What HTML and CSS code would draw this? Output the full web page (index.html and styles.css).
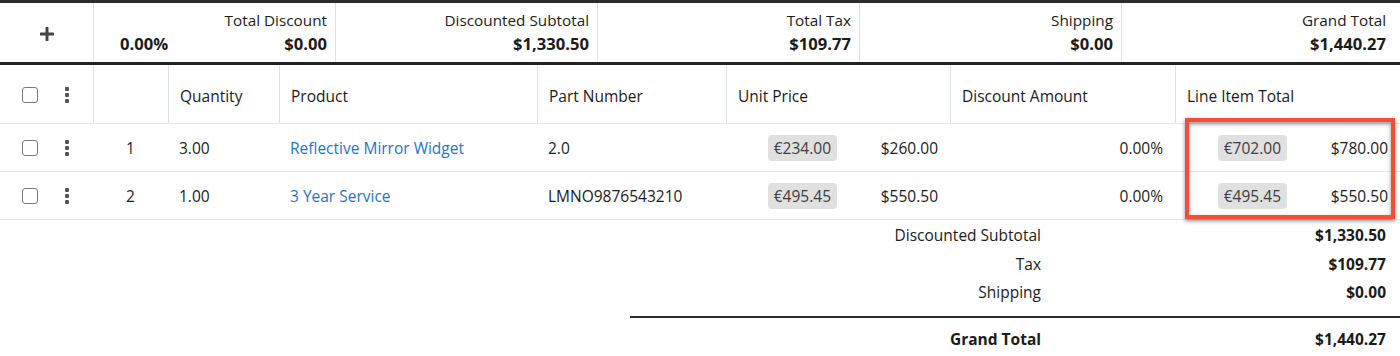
FILE: index.html
```html
<!DOCTYPE html>
<html>
<head>
<meta charset="utf-8">
<link rel="stylesheet" href="styles.css">
</head>
<body>
<div class="worksheet">
  <div class="summary">
    <div class="sum-cell sum-add">
      <svg width="14" height="14" viewBox="0 0 14 14"><path d="M7 1v12M1 7h12" stroke="#444" stroke-width="3" stroke-linecap="round"/></svg>
    </div>
    <div class="sum-cell sum-discount">
      <div class="sum-label">Total Discount</div>
      <div class="sum-values"><span class="sum-value">0.00%</span><span class="sum-value">$0.00</span></div>
    </div>
    <div class="sum-cell">
      <div class="sum-label">Discounted Subtotal</div>
      <div class="sum-value">$1,330.50</div>
    </div>
    <div class="sum-cell">
      <div class="sum-label">Total Tax</div>
      <div class="sum-value">$109.77</div>
    </div>
    <div class="sum-cell">
      <div class="sum-label">Shipping</div>
      <div class="sum-value">$0.00</div>
    </div>
    <div class="sum-cell sum-last">
      <div class="sum-label">Grand Total</div>
      <div class="sum-value">$1,440.27</div>
    </div>
  </div>

  <div class="grid head">
    <div class="cell c-ctl"><span class="checkbox"></span><span class="dots"><i></i><i></i><i></i></span></div>
    <div class="cell"></div>
    <div class="cell">Quantity</div>
    <div class="cell">Product</div>
    <div class="cell">Part Number</div>
    <div class="cell">Unit Price</div>
    <div class="cell">Discount Amount</div>
    <div class="cell">Line Item Total</div>
  </div>

  <div class="rows">
    <div class="grid row">
      <div class="cell c-ctl"><span class="checkbox"></span><span class="dots"><i></i><i></i><i></i></span></div>
      <div class="cell c-num">1</div>
      <div class="cell">3.00</div>
      <div class="cell"><a class="link">Reflective Mirror Widget</a></div>
      <div class="cell">2.0</div>
      <div class="cell c-money"><span class="badge">€234.00</span><span class="amt">$260.00</span></div>
      <div class="cell c-right">0.00%</div>
      <div class="cell c-money"><span class="badge">€702.00</span><span class="amt">$780.00</span></div>
    </div>
    <div class="grid row">
      <div class="cell c-ctl"><span class="checkbox"></span><span class="dots"><i></i><i></i><i></i></span></div>
      <div class="cell c-num">2</div>
      <div class="cell">1.00</div>
      <div class="cell"><a class="link">3 Year Service</a></div>
      <div class="cell">LMNO9876543210</div>
      <div class="cell c-money"><span class="badge">€495.45</span><span class="amt">$550.50</span></div>
      <div class="cell c-right">0.00%</div>
      <div class="cell c-money"><span class="badge">€495.45</span><span class="amt">$550.50</span></div>
    </div>
    <div class="highlight"></div>
  </div>

  <div class="totals">
    <div class="t-label">Discounted Subtotal</div><div class="t-value">$1,330.50</div>
    <div class="t-label">Tax</div><div class="t-value">$109.77</div>
    <div class="t-label">Shipping</div><div class="t-value">$0.00</div>
    <div class="t-rule"></div>
    <div class="t-label t-grand">Grand Total</div><div class="t-value">$1,440.27</div>
  </div>
</div>
</body>
</html>
```

FILE: styles.css
```css
* { box-sizing: border-box; }
html, body { margin: 0; padding: 0; background: #fff; }
body {
  font-family: "Open Sans", "Noto Sans", sans-serif;
  font-size: 15.5px;
  color: #1b1b1b;
  width: 1400px;
  height: 356px;
  overflow: hidden;
}
.worksheet { width: 1400px; }

.summary {
  display: grid;
  grid-template-columns: 93px 242px 262px 262px 262px 279px;
  border-top: 3px solid #2b2b2b;
  border-bottom: 3px solid #222;
  height: 65px;
}
.sum-cell {
  display: flex;
  flex-direction: column;
  align-items: flex-end;
  padding: 7px 8px 0 0;
  border-left: 1px solid #dde3ea;
}
.sum-add {
  border-left: none;
  align-items: center;
  justify-content: center;
  padding: 2px 0 0 0;
}
.sum-discount { padding-left: 26px; }
.sum-discount .sum-values {
  display: flex;
  justify-content: space-between;
  width: 100%;
}
.sum-last { padding-right: 14px; }
.sum-label { font-size: 15.3px; line-height: 21px; }
.sum-value { font-size: 16.6px; font-weight: 700; line-height: 26px; }

.grid {
  display: grid;
  grid-template-columns: 93px 75px 111px 258px 189px 224px 225px 225px;
}
.head { height: 59px; border-bottom: 1px solid #e4e7ee; }
.head .cell { border-left: 1px solid #dde3ea; padding-top: 3px; }
.head .cell:first-child { border-left: none; padding-top: 1px; }
.cell {
  display: flex;
  align-items: center;
  padding: 0 11px;
  white-space: nowrap;
}
.c-ctl { padding: 0 0 0 22px; gap: 27px; }
.c-num { justify-content: center; padding: 0; }
.c-right { justify-content: flex-end; padding-right: 12px; }
.c-money { justify-content: flex-end; padding-right: 12px; }

.rows { position: relative; }
.row { height: 48px; border-bottom: 1px solid #e4e7ee; }

.checkbox {
  width: 16px;
  height: 16px;
  border: 1.5px solid #7a7a7a;
  border-radius: 3px;
  display: inline-block;
  flex: none;
}
.dots {
  display: flex;
  flex-direction: column;
  gap: 2px;
  width: 4px;
}
.dots i {
  display: block;
  width: 4px;
  height: 4px;
  border-radius: 1px;
  background: #555;
}
.link { color: #1b75cf; text-decoration: none; }

.badge {
  background: #e0e0e0;
  color: #3d3d3d;
  border-radius: 4px;
  height: 26px;
  line-height: 26px;
  padding: 0 6px;
}
.amt { width: 101px; text-align: right; }

.highlight {
  position: absolute;
  left: 1185px;
  top: -6px;
  width: 210px;
  height: 101px;
  border: 4px solid #f24e38;
  box-shadow: 0 2px 4px rgba(0,0,0,0.45), inset 0 2px 4px rgba(0,0,0,0.4);
  pointer-events: none;
}

.totals {
  display: grid;
  grid-template-columns: 423px 347px;
  margin-left: 630px;
  padding-top: 1px;
}
.t-label, .t-value { height: 28.5px; line-height: 28.5px; text-align: right; }
.t-label { padding-right: 12px; }
.t-value { padding-right: 14px; font-weight: 700; }
.t-rule {
  grid-column: 1 / 3;
  height: 2px;
  background: #2b2b2b;
  margin: 9px 0 7px;
}
.t-grand { font-weight: 700; }
```
